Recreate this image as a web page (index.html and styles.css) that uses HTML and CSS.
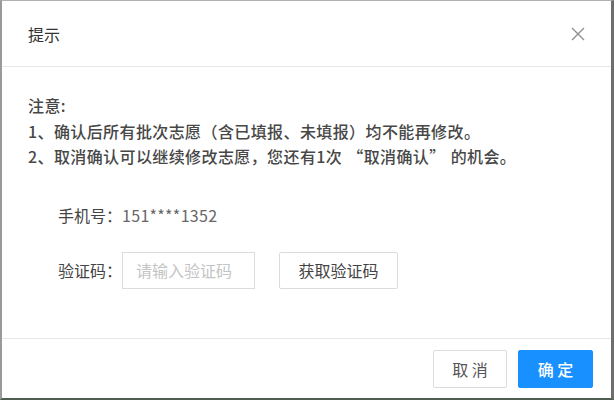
FILE: index.html
```html
<!DOCTYPE html>
<html lang="zh-CN">
<head>
<meta charset="utf-8">
<link rel="stylesheet" href="styles.css">
</head>
<body>
<div class="frame">
  <div class="dialog">
    <div class="header">
      <span class="title">提示</span>
      <svg class="close" width="14" height="14" viewBox="0 0 14 14"><path d="M1 1L13 13M13 1L1 13" stroke="#8c8c8c" stroke-width="1.3" fill="none"/></svg>
    </div>
    <div class="body">
      <div class="notice">
        <p>注意:</p>
        <p>1、确认后所有批次志愿（含已填报、未填报）均不能再修改。</p>
        <p>2、取消确认可以继续修改志愿，您还有1次<span class="q-open">“</span>取消确认<span class="q-close">”</span>的机会。</p>
      </div>
      <div class="form">
        <div class="row phone"><span class="label">手机号：</span><span class="value">151****1352</span></div>
        <div class="row code"><span class="label">验证码：</span><input class="input" type="text" placeholder="请输入验证码"><button class="btn get">获取验证码</button></div>
      </div>
    </div>
    <div class="footer">
      <button class="btn cancel">取 消</button>
      <button class="btn ok">确 定</button>
    </div>
  </div>
</div>
</body>
</html>
```

FILE: styles.css
```css
* { box-sizing: border-box; }
html, body { margin: 0; padding: 0; background: #fff; }
body {
  font-family: "Noto Sans CJK SC", "Noto Sans", sans-serif;
  color: #333;
}
.frame {
  width: 614px;
  height: 400px;
  border-top: 1px solid #b0b0b0;
  border-left: 2px solid #9a9a9a;
  border-right: 3px solid #6e6e6e;
  border-bottom: 2px solid #4e5e50;
  background: #fff;
}
.dialog {
  height: 100%;
  display: flex;
  flex-direction: column;
}
.header {
  height: 66px;
  flex: none;
  display: flex;
  align-items: center;
  justify-content: space-between;
  padding: 0 26px 0 26px;
  border-bottom: 1px solid #e6e6e6;
}
.title { font-size: 16px; color: #333; }
.close { display: block; }
.body {
  flex: 1;
  padding: 26px 28px 0 26px;
}
.notice p {
  margin: 0;
  font-size: 16px;
  line-height: 25.5px;
  color: #474747;
  font-weight: 500;
  letter-spacing: 0.4px;
}
.q-open { margin-left: 5px; }
.q-close { margin-right: 5px; }
.form { margin-left: 30px; margin-top: 35px; }
.row { display: flex; align-items: center; font-size: 16px; }
.phone { height: 20px; }
.label { color: #444; }
.value { color: #666; letter-spacing: 0.3px; }
.code { margin-top: 27px; }
.input {
  width: 133px;
  height: 37px;
  border: 1px solid #dcdcdc;
  padding: 0 0 0 13px;
  font: inherit;
  font-size: 16px;
  outline: none;
}
.input::placeholder { color: #c4c4c4; }
.btn {
  font-family: inherit;
  font-size: 16px;
  border: 1px solid #dcdcdc;
  background: #fff;
  color: #444;
  border-radius: 2px;
  padding: 0;
  height: 37px;
}
.get { width: 119px; margin-left: 24px; }
.footer {
  flex: none;
  border-top: 1px solid #e6e6e6;
  display: flex;
  justify-content: flex-end;
  gap: 11px;
  padding: 11px 18px 10px 0;
}
.cancel { width: 74px; height: 38px; color: #555; }
.ok {
  width: 75px;
  height: 38px;
  background: #1890ff;
  border-color: #1890ff;
  color: #fff;
  font-weight: 500;
}
```
